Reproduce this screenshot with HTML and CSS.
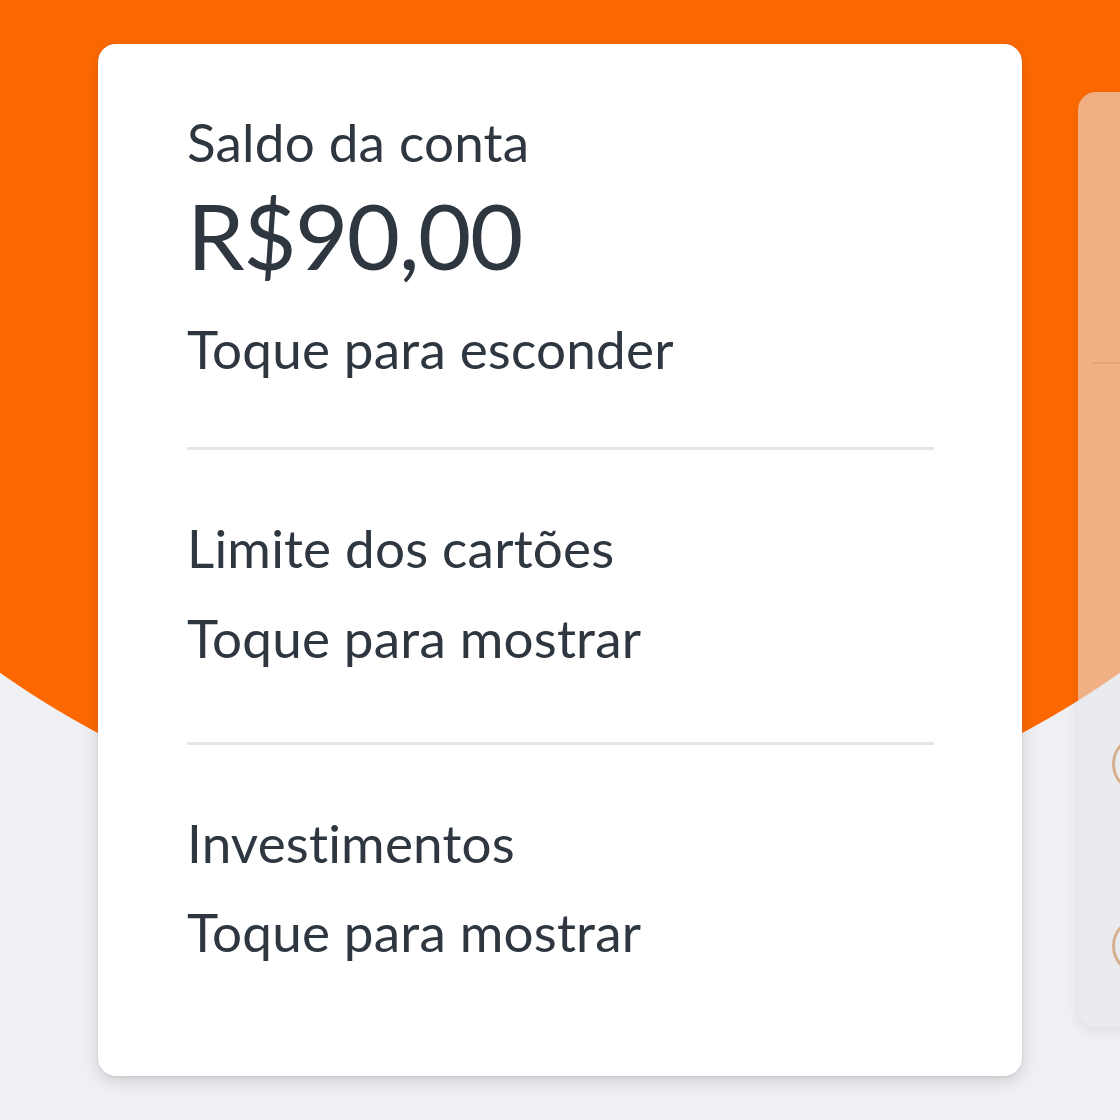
FILE: index.html
```html
<!DOCTYPE html>
<html lang="pt-BR">
<head>
<meta charset="utf-8">
<title>Saldo</title>
<link rel="stylesheet" href="styles.css">
</head>
<body>
<main class="carousel">
  <section class="card card-main">
    <div class="block block-first">
      <p class="label">Saldo da conta</p>
      <p class="value">R$90,00</p>
      <p class="action action-first">Toque para esconder</p>
    </div>
    <hr class="divider divider-one">
    <div class="block block-mid">
      <p class="label">Limite dos cartões</p>
      <p class="action">Toque para mostrar</p>
    </div>
    <hr class="divider divider-two">
    <div class="block block-last">
      <p class="label">Investimentos</p>
      <p class="action">Toque para mostrar</p>
    </div>
  </section>
  <section class="card card-side" aria-hidden="true">
    <div class="side-top"></div>
    <div class="side-line"></div>
    <div class="side-rows">
      <span class="ring"></span>
      <span class="ring"></span>
    </div>
  </section>
</main>
</body>
</html>
```
FILE: styles.css
```css
html, body {
  margin: 0;
  padding: 0;
  width: 1120px;
  height: 1120px;
  overflow: hidden;
}

body {
  font-family: Lato, "Open Sans", sans-serif;
  color: #2e3640;
  background:
    radial-gradient(900px 800px at 560px 47px, #fd6900 calc(100% - 1px), rgba(253,105,0,0) 100%),
    #eef0f3;
}

.carousel {
  display: flex;
  align-items: flex-start;
  gap: 56px;
  padding: 44px 0 0 98px;
}

.card {
  flex: none;
  border-radius: 18px;
  box-sizing: border-box;
}

.card-main {
  width: 924px;
  height: 1032px;
  background: #ffffff;
  padding: 71px 88px 0 89px;
  box-shadow: 0 5px 16px rgba(40, 40, 50, 0.16), 0 1px 3px rgba(0,0,0,0.08);
}

.block p {
  margin: 0;
  font-size: 53px;
  line-height: 53px;
  letter-spacing: 0.2px;
  white-space: nowrap;
}

.block .value {
  font-size: 92px;
  line-height: 92px;
  margin-top: 21px;
  letter-spacing: -1.5px;
}

.block .action-first {
  margin-top: 41px;
}

.block-mid .action {
  margin-top: 37px;
}

.block-last .action {
  margin-top: 36px;
}

.divider {
  border: 0;
  height: 3px;
  background: #e3e5e8;
  margin: 0;
}

.divider-one { margin-top: 72px; }
.block-mid { margin-top: 71px; }
.divider-two { margin-top: 78px; }
.block-last { margin-top: 71px; }

.card-side {
  width: 900px;
  height: 935px;
  margin-top: 48px;
  background: rgba(230, 232, 236, 0.56);
  box-shadow: 0 4px 12px rgba(40, 40, 50, 0.09);
  padding: 0 0 0 34px;
  display: flex;
  flex-direction: column;
}

.side-top {
  height: 270px;
}

.side-line {
  height: 2px;
  background: rgba(200, 140, 100, 0.30);
  margin-left: -20px;
}

.side-rows {
  display: flex;
  flex-direction: column;
  gap: 124px;
  padding-top: 371px;
}

.ring {
  display: block;
  width: 52px;
  height: 52px;
  border: 3px solid rgba(205, 150, 100, 0.7);
  border-radius: 50%;
}
```
